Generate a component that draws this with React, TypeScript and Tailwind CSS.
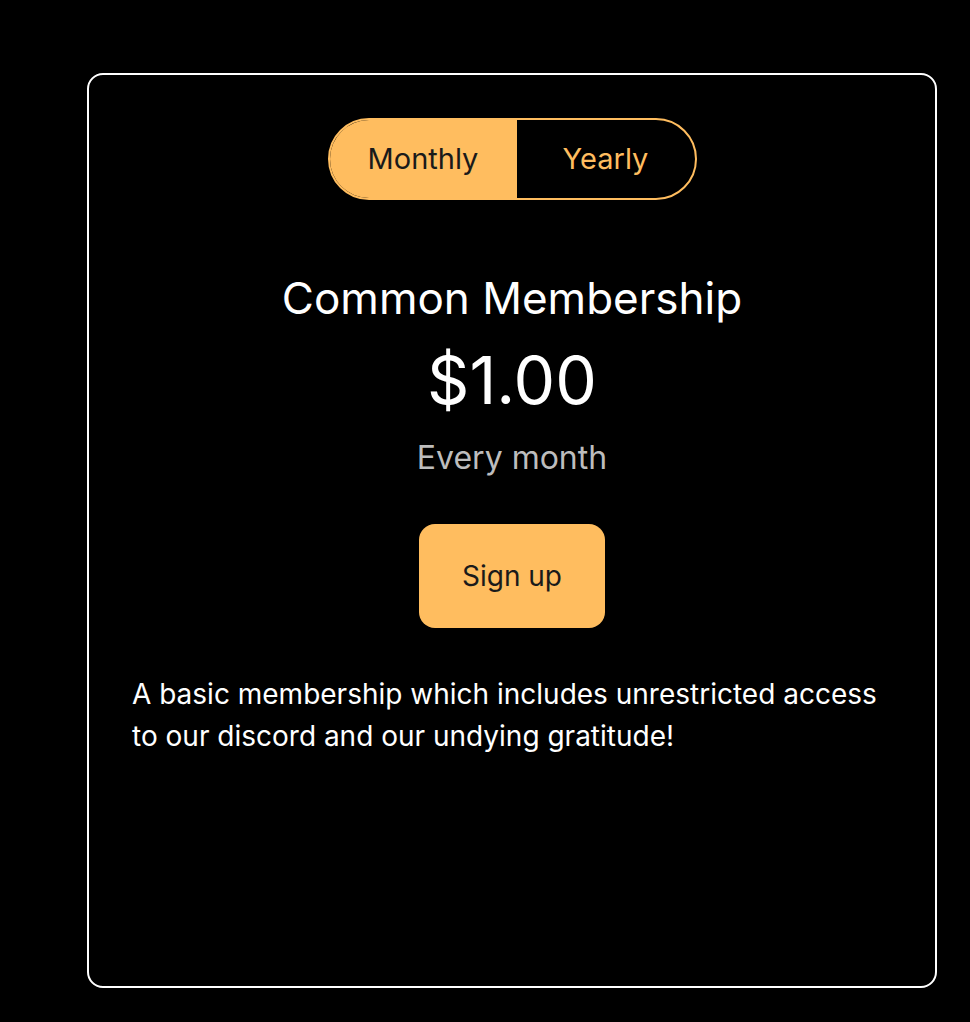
import { useState } from 'react';

type Period = 'monthly' | 'yearly';

export default function App() {
  const [period, setPeriod] = useState<Period>('monthly');

  return (
    <div className="min-h-screen bg-black pl-[87px] pr-[33px] pt-[73px] pb-[34px] font-['Inter',sans-serif]">
      <div className="flex h-[915px] w-[850px] flex-col items-center rounded-2xl border-2 border-white px-[43px] pt-[43px]">
        {/* Billing period toggle */}
        <div className="flex h-[82px] w-[369px] overflow-hidden rounded-full border-2 border-[#ffbd5f]">
          <button
            onClick={() => setPeriod('monthly')}
            className={
              period === 'monthly'
                ? 'w-[187px] bg-[#ffbd5f] text-[29px] text-[#1a1a1a]'
                : 'w-[187px] text-[29px] text-[#ffbd5f]'
            }
          >
            Monthly
          </button>
          <button
            onClick={() => setPeriod('yearly')}
            className={
              period === 'yearly'
                ? 'flex-1 bg-[#ffbd5f] text-[29px] text-[#1a1a1a]'
                : 'flex-1 text-[29px] text-[#ffbd5f]'
            }
          >
            Yearly
          </button>
        </div>

        <h1 className="mt-[72px] text-[44px] leading-[52px] text-white">Common Membership</h1>
        <p className="mt-[21px] text-[66px] leading-[70px] text-white">
          {period === 'monthly' ? '$1.00' : '$10.00'}
        </p>
        <p className="mt-[23px] text-[32px] leading-[40px] text-[#bdbdbd]">
          {period === 'monthly' ? 'Every month' : 'Every year'}
        </p>

        <button className="mt-[46px] h-[104px] w-[186px] rounded-2xl bg-[#ffbd5f] text-[28px] text-[#1a1a1a]">
          Sign up
        </button>

        <p className="mt-[45px] self-stretch text-[28px] leading-[42px] text-white">
          A basic membership which includes unrestricted access to our discord and our undying gratitude!
        </p>
      </div>
    </div>
  );
}
